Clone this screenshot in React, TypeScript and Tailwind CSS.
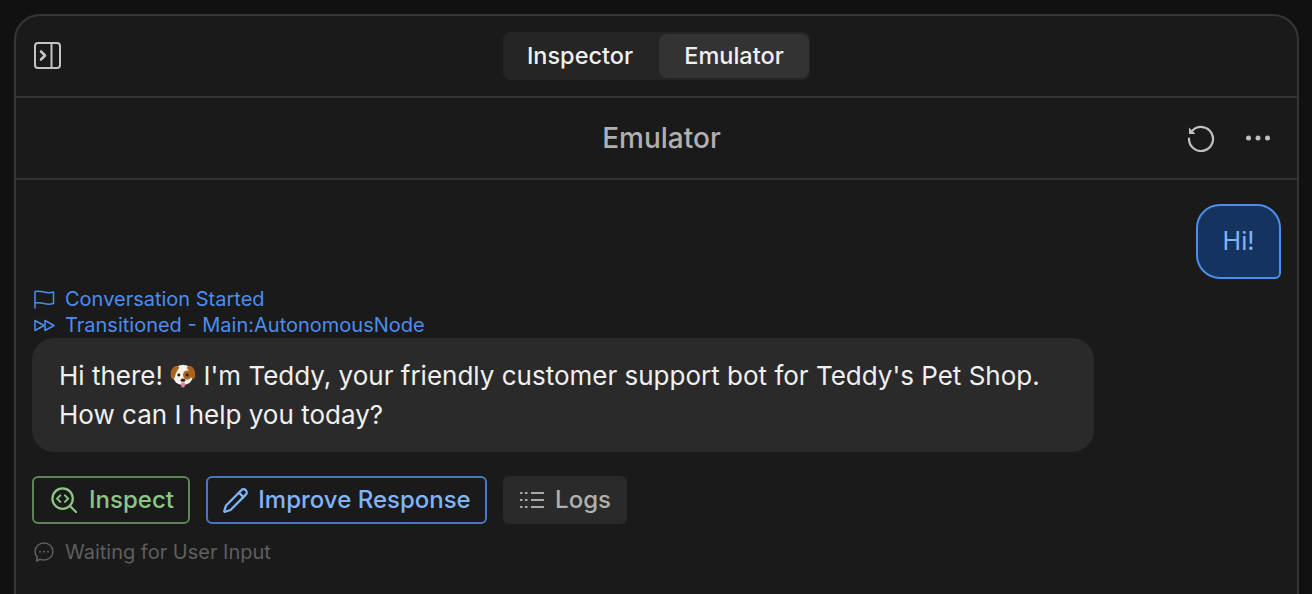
import { Pencil } from "lucide-react";

function PanelIcon() {
  return (
    <svg width="27" height="27" viewBox="0 0 27 27" fill="none" stroke="#c4c4c4" strokeWidth="2" strokeLinecap="round" strokeLinejoin="round">
      <rect x="1" y="1" width="25" height="25" rx="3" />
      <path d="M17.500 1v25" />
      <path d="M7 9.500l4 4-4 4" strokeWidth="2.600" />
    </svg>
  );
}

function ResetIcon() {
  return (
    <svg width="28" height="28" viewBox="0 0 28 28" fill="none">
      <path d="M5.500 6.500A12 12 0 1 1 2 14.500" stroke="#c0c0c0" strokeWidth="2.200" strokeLinecap="round" />
      <path d="M2 3.500v6.500h6.500z" fill="#c0c0c0" />
    </svg>
  );
}

function DotsIcon() {
  return (
    <svg width="24" height="6" viewBox="0 0 24 6" fill="#c0c0c0">
      <circle cx="2.500" cy="3" r="2.500" />
      <circle cx="12" cy="3" r="2.500" />
      <circle cx="21.500" cy="3" r="2.500" />
    </svg>
  );
}

function FlagIcon() {
  return (
    <svg width="21" height="19" viewBox="0 0 21 19" fill="none" stroke="#4c8df0" strokeWidth="1.500" strokeLinecap="round" strokeLinejoin="round">
      <path d="M1 18V1.500c3-.8 5.500-.4 9 .5s6 1 9.500 0v11.500c-3.500 1-6 .9-9.500 0s-6-1.300-9-.5" />
    </svg>
  );
}

function ForwardIcon() {
  return (
    <svg width="21" height="13" viewBox="0 0 21 13" fill="none" stroke="#4c8df0" strokeWidth="1.500" strokeLinejoin="round">
      <path d="M1 1.500v10l9-5z" />
      <path d="M11 1.500v10l9-5z" />
    </svg>
  );
}

function InspectIcon() {
  return (
    <svg width="26" height="26" viewBox="0 0 28 28" fill="none" stroke="#8cc685" strokeWidth="2.400" strokeLinecap="round" strokeLinejoin="round">
      <circle cx="12.500" cy="12.500" r="11" />
      <path d="M21 21l6 6" />
      <path d="M10 9l-3.500 3.500L10 16" strokeWidth="2.200" />
      <path d="M15 9l3.500 3.500L15 16" strokeWidth="2.200" />
    </svg>
  );
}

function LogsIcon() {
  return (
    <svg width="24" height="18" viewBox="0 0 24 18" fill="none" stroke="#a8a8a8" strokeWidth="2">
      <path d="M0 2h2.500M5 2h2.500M11 2h13" />
      <path d="M0 9h2.500M5 9h2.500M11 9h13" />
      <path d="M0 16h2.500M5 16h2.500M11 16h13" />
    </svg>
  );
}

function ChatIcon() {
  return (
    <svg width="20" height="20" viewBox="0 0 20 20" fill="none" stroke="#5f5f5f" strokeWidth="1.500" strokeLinecap="round" strokeLinejoin="round">
      <path d="M10 1c5 0 9 3.700 9 8.500S15 18 10 18c-1.300 0-2.500-.2-3.500-.7L2.500 19l.8-4C1.800 13.500 1 11.600 1 9.500 1 4.700 5 1 10 1z" />
      <path d="M6 9.800h.01M10 9.800h.01M14 9.800h.01" strokeWidth="2" />
    </svg>
  );
}

// no emoji font on the box, so the puppy is drawn
function PuppyIcon() {
  return (
    <svg width="26" height="26" viewBox="0 0 28 28" className="inline-block align-[-4px]">
      <ellipse cx="14" cy="13" rx="11" ry="11" fill="#f4f0ea" />
      <path d="M8 3C3 3 0 8 1 15c.4 2 3 3 4 1 1-3 1-6 5-11z" fill="#a8651f" />
      <path d="M20 3c5 0 8 5 7 12-.4 2-3 3-4 1-1-3-1-6-5-11z" fill="#a8651f" />
      <ellipse cx="18.500" cy="13" rx="4.500" ry="5" fill="#a8651f" />
      <circle cx="9.500" cy="13" r="1.600" fill="#2a1a10" />
      <circle cx="18.500" cy="13" r="1.600" fill="#2a1a10" />
      <ellipse cx="14" cy="18.500" rx="2.500" ry="1.700" fill="#2a2224" />
      <path d="M12 21h4v3.500a2 2 0 0 1-4 0z" fill="#e8808f" />
    </svg>
  );
}

export default function App() {
  return (
    <div className="h-[594px] overflow-hidden bg-[#111111] pl-[14px] pr-[13px] pt-[14px] font-['Inter',sans-serif]">
      <div className="flex h-[640px] flex-col rounded-t-[26px] border-2 border-[#363636] bg-[#1a1a1a]">
        {/* Top bar */}
        <div className="relative flex h-[82px] items-start justify-center border-b-2 border-[#333333] pt-[16px]">
          <button className="absolute left-[18px] top-[26px]">
            <PanelIcon />
          </button>
          <div className="flex h-[48px] w-[307px] items-center rounded-lg bg-[#252525] pl-0.5 pr-px">
            <div className="flex h-[44px] flex-1 items-center justify-center pr-[4px] text-[23.5px] font-medium text-[#f0f0f0]">Inspector</div>
            <div className="flex h-[44px] w-[150px] items-center justify-center rounded-lg bg-[#333333] text-[23.5px] font-medium text-[#f0f0f0]">Emulator</div>
          </div>
        </div>

        {/* Panel title */}
        <div className="relative flex h-[82px] items-center justify-center border-b-2 border-[#333333] pl-[10px]">
          <span className="text-[28px] font-medium text-[#b0b0b0]">Emulator</span>
          <div className="absolute right-[27px] top-[26px] flex items-center gap-[31px]">
            <ResetIcon />
            <DotsIcon />
          </div>
        </div>

        {/* Conversation */}
        <div className="flex flex-col px-4 pt-[24px]">
          <div className="flex justify-end">
            <div className="flex h-[75px] w-[85px] items-center justify-center rounded-[24px] rounded-br-[6px] border-2 border-[#4c8df0] bg-[#14335f] text-[25px] text-[#82b4fb]">
              Hi!
            </div>
          </div>

          <div className="mt-[7px] flex h-[26px] items-center gap-[10px] pl-[2px] text-[20px] text-[#4c8df0]">
            <FlagIcon />
            <span>Conversation Started</span>
          </div>
          <div className="flex h-[26px] items-center gap-[10px] pl-[2px] text-[20px] text-[#4c8df0]">
            <ForwardIcon />
            <span>Transitioned - Main:AutonomousNode</span>
          </div>

          <div className="w-[1062px] rounded-[22px] bg-[#2a2a2a] px-[27px] py-[18px] text-[26px] leading-[39px] text-[#f0f0f0]">
            Hi there! <PuppyIcon /> I'm Teddy, your friendly customer support bot for Teddy's Pet Shop.
            <br />
            How can I help you today?
          </div>

          <div className="mt-[24px] flex gap-4">
            <div className="flex h-[48px] w-[158px] items-center justify-center gap-[12px] rounded-md border-2 border-[#5c8656] pl-[3px] text-[24px] font-medium text-[#8cc685]">
              <InspectIcon />
              <span>Inspect</span>
            </div>
            <div className="flex h-[48px] w-[281px] items-center justify-center gap-[9px] rounded-md border-2 border-[#4a78c0] text-[24px] font-medium text-[#82b4fb]">
              <Pencil size={27} strokeWidth={2} />
              <span>Improve Response</span>
            </div>
            <div className="flex h-[48px] w-[124px] items-center justify-center gap-[11px] rounded-md bg-[#2a2a2a] pl-px text-[24px] font-medium text-[#b0b0b0]">
              <LogsIcon />
              <span>Logs</span>
            </div>
          </div>

          <div className="mt-[15px] flex h-[26px] items-center gap-[11px] pl-[2px] text-[20px] text-[#5f5f5f]">
            <ChatIcon />
            <span>Waiting for User Input</span>
          </div>
        </div>
      </div>
    </div>
  );
}
